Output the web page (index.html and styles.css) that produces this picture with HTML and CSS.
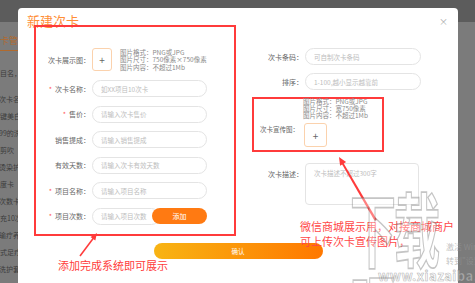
FILE: index.html
```html
<!DOCTYPE html>
<html lang="zh-CN">
<head>
  <meta charset="UTF-8" />
  <meta name="viewport" content="width=device-width, initial-scale=1.0" />
  <title>新建次卡</title>
  <link rel="stylesheet" href="styles.css">
</head>
<body>
  <!-- page behind the mask -->
  <div class="page">
    <div class="page-head"></div>
    <div class="page-main">
      <div class="tab">次卡管理</div>
      <div class="search">项目名，搜索</div>
      <ul class="list">
        <li>次卡名称</li>
        <li>一键美白卡</li>
        <li>99的洗剪吹</li>
        <li>洗剪吹</li>
        <li>烫染护理卡</li>
        <li>年度卡</li>
        <li>次数卡套餐</li>
        <li>计充10次卡</li>
        <li>瑜疗养护</li>
        <li>新式足疗</li>
        <li>洗护套餐</li>
      </ul>
    </div>
  </div>

  <div class="modal">
    <div class="modal-head">
      <h2 class="modal-title">新建次卡</h2>
      <span class="close">×</span>
    </div>

    <div class="modal-body">
      <div class="col-left mark">
        <div class="row row-upload">
          <label>次卡展示图：</label>
          <div class="upload-wrap">
            <div class="upload">+</div>
            <div class="hint">
              <p>图片格式：PNG或JPG</p>
              <p>图片尺寸：750像素×750像素</p>
              <p>图片内容：不超过1Mb</p>
            </div>
          </div>
        </div>
        <div class="row">
          <label><i>*</i>次卡名称：</label>
          <input type="text" placeholder="如XX项目10次卡">
        </div>
        <div class="row">
          <label><i>*</i>售价：</label>
          <input type="text" placeholder="请输入次卡售价">
        </div>
        <div class="row">
          <label>销售提成：</label>
          <input type="text" placeholder="请输入销售提成">
        </div>
        <div class="row">
          <label>有效天数：</label>
          <input type="text" placeholder="请输入次卡有效天数">
        </div>
        <div class="row">
          <label><i>*</i>项目名称：</label>
          <input type="text" placeholder="请输入项目名称">
        </div>
        <div class="row">
          <label><i>*</i>项目次数：</label>
          <div class="add-wrap">
            <input type="text" placeholder="请输入项目次数">
            <button class="btn-add">添加</button>
          </div>
        </div>
      </div>

      <div class="col-right">
        <div class="row row-r">
          <label>次卡条码：</label>
          <input type="text" placeholder="可自制次卡条码">
        </div>
        <div class="row row-r">
          <label>排序：</label>
          <input type="text" placeholder="1-100,越小显示越靠前">
        </div>
        <div class="promo mark">
          <label>次卡宣传图：</label>
          <div class="promo-body">
            <div class="hint">
              <p>图片格式：PNG或JPG</p>
              <p>图片尺寸：宽750像素</p>
              <p>图片内容：不超过1Mb</p>
            </div>
            <div class="upload">+</div>
          </div>
        </div>
        <div class="row row-r row-desc">
          <label>次卡描述：</label>
          <textarea placeholder="次卡描述不超过300字"></textarea>
        </div>
      </div>
    </div>

    <button class="btn-ok">确认</button>
  </div>

  <!-- annotations drawn over the screenshot -->
  <svg class="arrows" width="475" height="283" viewBox="0 0 475 283">
    <line x1="80" y1="256" x2="93.5" y2="238" stroke="#ff3b3b" stroke-width="1.6"/>
    <polygon points="97,233 95.3,240.5 90.5,236.9" fill="#ff3b3b"/>
    <polygon points="377,220 374.6,220.8 341.6,163.5 343.2,162.6" fill="#ff3b3b"/>
    <polygon points="339,157 346.1,162.1 340.1,165.7" fill="#ff3b3b"/>
  </svg>
  <p class="note note-left">添加完成系统即可展示</p>
  <p class="note note-right">微信商城展示用，对接商城商户<br>可上传次卡宣传图片，</p>

  <div class="watermark">
    <span class="wm-logo">下载吧</span>
    <span class="wm-act">激活 Windows<br>转到"设置"以激活</span>
    <span class="wm-url">www.xiazaiba.com</span>
  </div>
</body>
</html>
```

FILE: styles.css
```css
:root{
  --orange:#ff7a12;
  --red:#ff3b3b;
  --label:#666;
  --line:#e4e4e4;
  --ph:#bdbdbd;
}
*{box-sizing:border-box}
body{margin:0;width:475px;height:283px;overflow:hidden;position:relative;background:#7b7b7b;font-family:'Noto Sans CJK SC','Noto Sans',sans-serif}
p{margin:0}

/* page under mask */
.page-head{height:22px;background:#5c5c5c}
.page-main{margin-left:-9px}
.tab{margin-top:13px;font-size:9px;line-height:12px;color:#b06a2e;width:36px;padding-bottom:3px;border-bottom:1px solid #b06a2e}
.search{margin-top:17px;margin-left:2px;font-size:7px;line-height:10px;color:#3c3c3c}
.list{list-style:none;margin:13px 0 0;padding:0}
.list li{height:17px;line-height:17px;font-size:7px;color:#3c3c3c;padding-left:2px;white-space:nowrap}
.list li:nth-child(odd){padding-left:8px}

/* modal */
.modal{position:absolute;left:18px;top:8px;width:440px;height:300px;background:#fff;border-radius:4px}
.modal-head{display:flex;justify-content:space-between;height:17px}
.modal-title{margin:5px 0 0 9px;font-size:13px;line-height:16px;font-weight:400;color:#ff8f38}
.close{margin:9px 10px 0 0;font-size:9px;line-height:10px;color:#aaa}
.modal-body{display:flex;align-items:flex-start;gap:16px;padding-left:16px}
.mark{border:2px solid var(--red)}

.col-left{width:202px;height:211px;padding:21px 0 9px;display:flex;flex-direction:column;gap:8.5px}
.row{display:grid;grid-template-columns:54px 115px;column-gap:2px;align-items:center}
.row label{text-align:right;font-size:7px;line-height:10px;color:var(--label);white-space:nowrap}
.row label i{font-style:normal;color:#ff5a5a;margin-right:3px}
.row-upload{height:23.5px;align-items:start}
.row-upload label{margin-top:7px}
.upload-wrap{display:flex;gap:8px;align-items:flex-start}
.upload{width:20px;height:23px;border:1px solid #fbd2ad;border-radius:3px;display:flex;align-items:center;justify-content:center;font-size:10px;color:#666;flex:none}
.hint{margin-top:1px;font-size:6.5px;line-height:7.3px;color:#8a8a8a;white-space:nowrap}

input,textarea{font-family:inherit;font-size:6.5px;color:#555;border:1px solid var(--line);outline:none;background:#fff}
input{height:17px;width:100%;border-radius:9px;padding:0 8px}
input::placeholder,textarea::placeholder{color:var(--ph)}
.add-wrap{display:flex;align-items:center}
.add-wrap input{width:68px;flex:none}
.btn-add{width:56px;height:16px;margin-left:-8px;border:none;border-radius:8px;background:var(--orange);color:#fff;font-family:inherit;font-size:7px;padding:0}

.col-right{width:172px;padding-top:23px;display:flex;flex-direction:column}
.row-r{grid-template-columns:51px 116px}
.row-r + .row-r{margin-top:8px}
.promo{margin-top:7px;width:132px;height:55px;display:grid;grid-template-columns:47px auto;column-gap:2px}
.promo label{align-self:center;padding-top:8px;padding-right:2px;text-align:right;font-size:6.5px;line-height:10px;color:var(--label);white-space:nowrap}
.promo-body{display:flex;flex-direction:column;gap:4px}
.promo .hint{margin-top:-1px;line-height:7px}
.promo .upload{width:23px;height:24px;margin-left:1px}
.row-desc{margin-top:11px;align-items:start}
.row-desc label{margin-top:6px}
.row-desc textarea{width:114px;height:42px;border-radius:4px;padding:4px 8px;resize:none}

.btn-ok{display:block;margin:7px auto 0;width:169px;height:16px;border:none;border-radius:8px;padding:0;background:linear-gradient(90deg,#f8b414,#ff7800);color:#fff;font-family:inherit;font-size:6.5px}

/* annotations */
.arrows{position:absolute;left:0;top:0}
.note{position:absolute;color:var(--red);font-size:11px;white-space:nowrap}
.note-left{left:58px;top:258px;line-height:14px}
.note-right{left:300px;top:219px;line-height:15px;color:#ff4747}

/* watermark */
.watermark{position:absolute;left:0;top:0;width:475px;height:283px;pointer-events:none}
.wm-logo{position:absolute;left:350px;top:186px;font-size:46px;font-weight:700;letter-spacing:-2px;line-height:46px;color:rgba(255,255,255,.35);-webkit-text-stroke:1px rgba(110,110,110,.4);transform:scaleY(1.75);transform-origin:top left}
.wm-act{position:absolute;left:446px;top:240px;font-size:8px;line-height:14px;color:rgba(150,150,150,.6);white-space:nowrap}
.wm-url{position:absolute;left:378px;top:266px;font-size:13px;font-weight:700;letter-spacing:.5px;color:rgba(255,255,255,.35);-webkit-text-stroke:.6px rgba(110,110,110,.5);white-space:nowrap}
```
